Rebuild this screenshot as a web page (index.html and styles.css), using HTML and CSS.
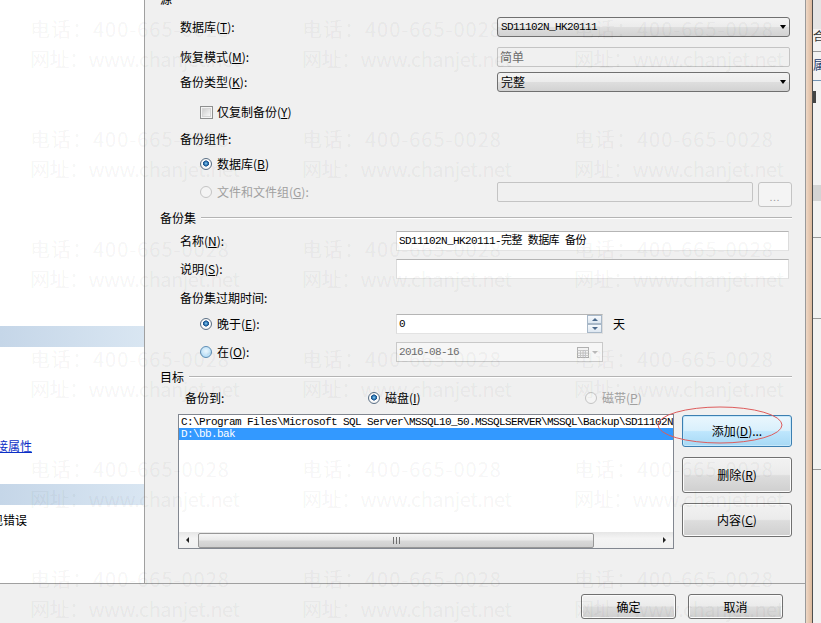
FILE: index.html
```html
<!DOCTYPE html>
<html>
<head>
    <meta charset="utf-8">
    <title>备份数据库</title>
    <link rel="stylesheet" href="styles.css">
</head>
<body>
<div class="screen">
    <div class="dialog">
        <div class="main">
            <div class="sidebar">
                <div class="band band-first"></div>
                <a class="side-link" href="#">查看连接属性</a>
                <div class="band band-second"></div>
                <div class="side-note">出现错误</div>
            </div>

            <div class="content">
                <div class="group-title title-source"><span>源</span><i class="rule"></i></div>

                <div class="row r-db">
                    <span class="label label-src">数据库(<u>T</u>):</span>
                    <div class="combo w-src"><span class="mono">SD11102N_HK20111</span><b class="arrow"></b></div>
                </div>
                <div class="row r-recovery">
                    <span class="label label-src">恢复模式(<u>M</u>):</span>
                    <div class="field field-off w-src">简单</div>
                </div>
                <div class="row r-type">
                    <span class="label label-src">备份类型(<u>K</u>):</span>
                    <div class="combo w-src"><span>完整</span><b class="arrow"></b></div>
                </div>
                <div class="row indent r-copy">
                    <span class="check"></span><span>仅复制备份(<u>Y</u>)</span>
                </div>
                <div class="row r-component"><span class="label">备份组件:</span></div>
                <div class="row indent r-dbopt">
                    <span class="radio on"></span><span>数据库(<u>B</u>)</span>
                </div>
                <div class="row indent r-files">
                    <span class="option opt-src disabled"><span class="radio off"></span><span>文件和文件组(<u>G</u>):</span></span>
                    <div class="field field-off field-files"></div>
                    <button class="btn btn-more" disabled>...</button>
                </div>

                <div class="group-title title-set"><span>备份集</span><i class="rule"></i></div>

                <div class="row r-name">
                    <span class="label label-set">名称(<u>N</u>):</span>
                    <div class="field w-set"><span class="mono">SD11102N_HK20111-完整 数据库 备份</span></div>
                </div>
                <div class="row r-desc">
                    <span class="label label-set">说明(<u>S</u>):</span>
                    <div class="field w-set"></div>
                </div>
                <div class="row r-expiry"><span class="label">备份集过期时间:</span></div>
                <div class="row indent r-later">
                    <span class="option opt-set"><span class="radio on"></span><span>晚于(<u>E</u>):</span></span>
                    <div class="field w-spin">
                        <span class="mono">0</span>
                        <span class="spin">
                            <span class="spin-btn"><i class="tri-up"></i></span>
                            <span class="spin-btn"><i class="tri-down"></i></span>
                        </span>
                    </div>
                    <span class="day">天</span>
                </div>
                <div class="row indent r-on">
                    <span class="option opt-set"><span class="radio hover"></span><span>在(<u>O</u>):</span></span>
                    <div class="field field-date w-spin">
                        <span class="mono">2016-08-16</span>
                        <span class="date-btn">
                            <svg width="12" height="11" viewBox="0 0 12 11"><rect x="0.5" y="0.5" width="11" height="10" fill="#f2f2f2" stroke="#b0b0b0"/><path d="M0.5 3.5h11M0.5 6h11M0.5 8.5h11M3.5 3.5v7M6 3.5v7M8.5 3.5v7" stroke="#c8c8c8"/></svg>
                            <i class="tri-down light"></i>
                        </span>
                    </div>
                </div>

                <div class="group-title title-target"><span>目标</span><i class="rule"></i></div>

                <div class="row r-dest">
                    <span class="label label-dest">备份到:</span>
                    <span class="option opt-disk"><span class="radio on"></span><span>磁盘(<u>I</u>)</span></span>
                    <span class="option disabled"><span class="radio off"></span><span>磁带(<u>P</u>)</span></span>
                </div>
                <div class="row r-list">
                    <div class="list">
                        <div class="list-item mono">C:\Program Files\Microsoft SQL Server\MSSQL10_50.MSSQLSERVER\MSSQL\Backup\SD11102N_HK20111.bak</div>
                        <div class="list-item mono sel">D:\bb.bak</div>
                        <div class="hscroll">
                            <span class="sb-btn"><i class="tri-left"></i></span>
                            <span class="thumb">
                                <svg width="7" height="7" viewBox="0 0 7 7"><path d="M0.5 0v7M3.5 0v7M6.5 0v7" stroke="#6f6f6f"/></svg>
                            </span>
                            <span class="sb-btn sb-end"><i class="tri-right"></i></span>
                        </div>
                    </div>
                    <div class="side-buttons">
                        <button class="btn btn-focus btn-add">添加(<u>D</u>)...</button>
                        <button class="btn btn-del">删除(<u>R</u>)</button>
                        <button class="btn btn-props">内容(<u>C</u>)</button>
                    </div>
                </div>
            </div>
        </div>
        <div class="footer">
            <button class="btn btn-footer">确定</button>
            <button class="btn btn-footer">取消</button>
        </div>
    </div>

    <div class="frame-edge"></div>

    <div class="behind">
        <div class="behind-top"></div>
        <div class="behind-char">合</div>
        <div class="behind-line"></div>
        <div class="behind-char blue">属</div>
        <div class="behind-line blue"></div>
        <div class="behind-block"></div>
        <div class="behind-band"></div>
        <div class="behind-line gap1"></div>
        <div class="behind-line gap2"></div>
        <div class="behind-line gap3"></div>
    </div>

    <svg class="ring" width="130" height="42" viewBox="0 0 130 42">
        <ellipse cx="64" cy="20" rx="62" ry="18" fill="none" stroke="#de5c5c" stroke-width="1"/>
    </svg>

    <div class="watermark">
        <div class="mark"><div class="tel">电话：400-665-0028</div><div class="web">网址：www.chanjet.net</div></div>
        <div class="mark"><div class="tel">电话：400-665-0028</div><div class="web">网址：www.chanjet.net</div></div>
        <div class="mark"><div class="tel">电话：400-665-0028</div><div class="web">网址：www.chanjet.net</div></div>
        <div class="mark"><div class="tel">电话：400-665-0028</div><div class="web">网址：www.chanjet.net</div></div>
        <div class="mark"><div class="tel">电话：400-665-0028</div><div class="web">网址：www.chanjet.net</div></div>
        <div class="mark"><div class="tel">电话：400-665-0028</div><div class="web">网址：www.chanjet.net</div></div>
        <div class="mark"><div class="tel">电话：400-665-0028</div><div class="web">网址：www.chanjet.net</div></div>
        <div class="mark"><div class="tel">电话：400-665-0028</div><div class="web">网址：www.chanjet.net</div></div>
        <div class="mark"><div class="tel">电话：400-665-0028</div><div class="web">网址：www.chanjet.net</div></div>
        <div class="mark"><div class="tel">电话：400-665-0028</div><div class="web">网址：www.chanjet.net</div></div>
        <div class="mark"><div class="tel">电话：400-665-0028</div><div class="web">网址：www.chanjet.net</div></div>
        <div class="mark"><div class="tel">电话：400-665-0028</div><div class="web">网址：www.chanjet.net</div></div>
        <div class="mark"><div class="tel">电话：400-665-0028</div><div class="web">网址：www.chanjet.net</div></div>
        <div class="mark"><div class="tel">电话：400-665-0028</div><div class="web">网址：www.chanjet.net</div></div>
        <div class="mark"><div class="tel">电话：400-665-0028</div><div class="web">网址：www.chanjet.net</div></div>
        <div class="mark"><div class="tel">电话：400-665-0028</div><div class="web">网址：www.chanjet.net</div></div>
        <div class="mark"><div class="tel">电话：400-665-0028</div><div class="web">网址：www.chanjet.net</div></div>
        <div class="mark"><div class="tel">电话：400-665-0028</div><div class="web">网址：www.chanjet.net</div></div>
    </div>
</div>
</body>
</html>
```

FILE: styles.css
```css
* {
    box-sizing: border-box;
}
body {
    margin: 0;
    background: #f0f0f0;
    color: #000;
    font-family: "Noto Sans CJK SC", "Liberation Sans", sans-serif;
    font-size: 12px;
    line-height: 14px;
}
u {
    text-decoration: underline;
}
.screen {
    position: relative;
    width: 821px;
    height: 623px;
    display: flex;
    overflow: hidden;
}

/* dialog */
.dialog {
    width: 805px;
    display: flex;
    flex-direction: column;
    background: #f0f0f0;
}
.main {
    height: 584px;
    display: flex;
    border-bottom: 1px solid #a0a0a0;
}
.sidebar {
    width: 145px;
    background: #fff;
    border-right: 1px solid #a0a0a0;
    display: flex;
    flex-direction: column;
    overflow: hidden;
}
.band {
    height: 21px;
    flex-shrink: 0;
    background: linear-gradient(90deg, #c5d6e8, #d9e6f2);
}
.band-first {
    margin-top: 326px;
}
.side-link {
    margin: 93px 0 0 -40px;
    line-height: 12px;
    color: #0b2fc6;
    white-space: nowrap;
}
.band-second {
    margin-top: 32px;
}
.side-note {
    margin: 8px 0 0 -21px;
    white-space: nowrap;
}

.content {
    flex: 1;
    display: flex;
    flex-direction: column;
    padding: 0 13px 0 15px;
    overflow: hidden;
}
.group-title {
    display: flex;
    align-items: center;
    height: 12px;
    line-height: 12px;
    flex-shrink: 0;
}
.rule {
    flex: 1;
    height: 2px;
    margin-left: 5px;
    border-top: 1px solid #b4b4b4;
    border-bottom: 1px solid #fff;
}
.title-source { margin-top: -7px; }
.title-set { margin-top: 5px; }
.title-target { margin-top: 9px; }

.row {
    display: flex;
    align-items: center;
    flex-shrink: 0;
    margin-left: 20px;
    white-space: nowrap;
}
.indent { margin-left: 40px; }
.r-db { margin-top: 12px; height: 20px; }
.r-recovery { margin-top: 10px; height: 20px; }
.r-type { margin-top: 5px; height: 20px; }
.r-copy { margin-top: 13px; height: 14px; }
.r-component { margin-top: 13px; height: 14px; }
.r-dbopt { margin-top: 11px; height: 14px; }
.r-files { margin-top: 11px; height: 25px; align-items: flex-start; }
.r-name { margin-top: 7px; height: 20px; }
.r-desc { margin-top: 8px; height: 20px; }
.r-expiry { margin-top: 12px; height: 14px; }
.r-later { margin-top: 9px; height: 20px; }
.r-on { margin-top: 8px; height: 20px; }
.r-dest { margin-top: 8px; height: 14px; margin-left: 25px; }
.r-list { margin-top: 9px; height: 135px; margin-left: 18px; align-items: flex-start; }

.label-src { width: 317px; }
.label-set { width: 216px; }
.label-dest { width: 183px; }
.option {
    display: flex;
    align-items: center;
    height: 20px;
}
.opt-src { width: 297px; }
.opt-set { width: 196px; }
.opt-disk { width: 217px; }
.disabled { color: #a0a0a0; }

.mono {
    font-family: "Liberation Mono", "Noto Sans CJK SC", monospace;
    font-size: 11px;
    letter-spacing: -0.6px;
    white-space: nowrap;
}

/* controls */
.combo {
    display: flex;
    align-items: center;
    height: 20px;
    padding-left: 3px;
    border: 1px solid #707070;
    border-radius: 3px;
    background: linear-gradient(#f3f3f3, #ececec 48%, #dedede 52%, #d2d2d2);
}
.arrow {
    margin-left: auto;
    margin-right: 3px;
    width: 0;
    height: 0;
    border-style: solid;
    border-width: 4px 3.5px 0;
    border-color: #000 transparent transparent;
}
.field {
    display: flex;
    align-items: center;
    height: 20px;
    padding-left: 2px;
    background: #fff;
    border: 1px solid;
    border-color: #b5b5b5 #dcdcdc #e3e3e3 #dcdcdc;
}
.field-off {
    background: #f0f0f0;
    border-color: #c4c4c4;
    border-radius: 2px;
    color: #6d6d6d;
}
.field-files { width: 256px; }
.w-src { width: 293px; }
.w-set { width: 393px; }
.w-spin { width: 207px; }
.field-date {
    background: #f6f6f6;
    border-color: #c9c9c9;
    color: #6d6d6d;
}
.spin {
    margin-left: auto;
    width: 15px;
    height: 18px;
    display: flex;
    flex-direction: column;
}
.spin-btn {
    flex: 1;
    display: flex;
    align-items: center;
    justify-content: center;
    border: 1px solid #a8b8c8;
    background: linear-gradient(#f6f9fc, #dde7f1);
}
.tri-up, .tri-down, .tri-left, .tri-right {
    width: 0;
    height: 0;
    border-style: solid;
}
.tri-up {
    border-width: 0 3px 3px;
    border-color: transparent transparent #4c6a8c;
}
.tri-down {
    border-width: 3px 3px 0;
    border-color: #4c6a8c transparent transparent;
}
.tri-down.light {
    border-width: 3px 3.5px 0;
    border-color: #b8b8b8 transparent transparent;
    margin-left: 3px;
}
.date-btn {
    margin-left: auto;
    margin-right: 4px;
    display: flex;
    align-items: center;
}
.day { margin-left: 10px; }

.check {
    width: 13px;
    height: 13px;
    margin-right: 4px;
    border: 1px solid #8e8f8f;
    background: #fff;
    box-shadow: inset 0 0 0 1px #f4f4f4, inset 0 0 0 2px #d6d6d6;
    background-image: linear-gradient(135deg, #cfcfcf, #f7f7f7);
    background-size: 7px 7px;
    background-position: 2px 2px;
    background-repeat: no-repeat;
}
.radio {
    width: 12px;
    height: 12px;
    margin-right: 5px;
    flex-shrink: 0;
    border-radius: 50%;
    border: 1px solid #8e8f8f;
}
.radio.on {
    border-color: #5a6f85;
    background: radial-gradient(circle at 50% 45%, #8fd0f5 0, #2f79b5 22%, #1b4d85 38%, #fff 44%, #e6e6e6 100%);
}
.radio.hover {
    border-color: #5d8db5;
    background: radial-gradient(circle at 50% 40%, #eaf6fd 0, #b8def6 70%, #9ccbec 100%);
}
.radio.off {
    border-color: #c4c4c4;
    background: #f4f4f4;
}

.btn {
    font: inherit;
    color: #000;
    padding: 0;
    border: 1px solid #707070;
    border-radius: 3px;
    background: linear-gradient(#f2f2f2, #ebebeb 48%, #dddddd 52%, #cfcfcf);
    box-shadow: inset 0 0 0 1px #fbfbfb;
}
.btn-more {
    width: 34px;
    height: 25px;
    margin-left: 5px;
    border-color: #c4c4c4;
    background: #f4f4f4;
    color: #9a9a9a;
    box-shadow: none;
    font-size: 9px;
    padding-top: 6px;
    letter-spacing: 1px;
}
.btn-focus {
    border-color: #3c7fb1;
    background: linear-gradient(#eaf6fd, #d9f0fc 48%, #bee6fd 52%, #a7d9f5);
    box-shadow: inset 0 0 0 1px #c6e8fb;
}

.list {
    width: 496px;
    height: 135px;
    display: flex;
    flex-direction: column;
    border: 1px solid #828790;
    background: #fff;
    padding-top: 1px;
    overflow: hidden;
}
.list-item {
    height: 12px;
    line-height: 12px;
    padding-left: 2px;
    flex-shrink: 0;
}
.list-item.sel {
    background: #3399ff;
    color: #fff;
}
.hscroll {
    margin-top: auto;
    height: 16px;
    flex-shrink: 0;
    display: flex;
    align-items: center;
    background: linear-gradient(#e6e6e6, #f4f4f4 40%, #f0f0f0);
}
.sb-btn {
    width: 17px;
    height: 16px;
    display: flex;
    align-items: center;
    justify-content: center;
}
.sb-end { margin-left: auto; }
.tri-left {
    border-width: 3.5px 3.5px 3.5px 0;
    border-color: transparent #222 transparent transparent;
}
.tri-right {
    border-width: 3.5px 0 3.5px 3.5px;
    border-color: transparent transparent transparent #222;
}
.thumb {
    width: 396px;
    height: 15px;
    margin-left: 2px;
    display: flex;
    align-items: center;
    justify-content: center;
    border: 1px solid #979797;
    border-radius: 2px;
    background: linear-gradient(#f6f6f6, #e9e9e9 48%, #d9d9d9 52%, #cfcfcf);
}
.side-buttons {
    width: 110px;
    margin-left: 8px;
    display: flex;
    flex-direction: column;
}
.btn-add { margin-top: 1px; height: 32px; }
.btn-del { margin-top: 10px; height: 36px; }
.btn-props { margin-top: 10px; height: 34px; }

.footer {
    flex: 1;
    display: flex;
    justify-content: flex-end;
    align-items: flex-start;
    gap: 12px;
    padding: 10px 22px 0 0;
}
.btn-footer {
    width: 95px;
    height: 25px;
}

/* window edge and the window behind */
.frame-edge {
    width: 8px;
    background: linear-gradient(90deg, #9a9a9a 0 1px, #efd8c6 1px, #dcb99d 7px, #4e4e4e 7px);
}
.behind {
    flex: 1;
    display: flex;
    flex-direction: column;
    background: #f2f2f2;
    overflow: hidden;
    white-space: nowrap;
}
.behind-top {
    height: 29px;
    background: #e4e4e4;
    flex-shrink: 0;
}
.behind-char {
    height: 14px;
    line-height: 14px;
    color: #333;
    flex-shrink: 0;
}
.behind-char.blue {
    margin-top: 6px;
    color: #1d3c6c;
}
.behind-line {
    margin-top: 8px;
    height: 1px;
    background: #9a9a9a;
    flex-shrink: 0;
}
.behind-line.blue {
    background: #7393b3;
}
.behind-block {
    margin-top: 10px;
    width: 3px;
    height: 12px;
    background: #444;
    flex-shrink: 0;
}
.behind-band {
    margin-top: 82px;
    height: 16px;
    background: #d4d4d4;
    flex-shrink: 0;
}
.behind-line.gap1 { margin-top: 36px; }
.behind-line.gap2 { margin-top: 80px; }
.behind-line.gap3 { margin-top: 150px; }

.ring {
    position: absolute;
    left: 656px;
    top: 405px;
    pointer-events: none;
}

.watermark {
    position: absolute;
    top: 0;
    left: 0;
    width: 821px;
    height: 623px;
    display: grid;
    grid-template-columns: repeat(3, 272px);
    grid-auto-rows: 60px;
    row-gap: 50px;
    padding: 14px 0 0 30px;
    pointer-events: none;
    color: rgba(0, 0, 0, 0.055);
    font-size: 20px;
    line-height: 30px;
    white-space: nowrap;
}
.tel { letter-spacing: 1px; }
.web { letter-spacing: -0.5px; }
```
